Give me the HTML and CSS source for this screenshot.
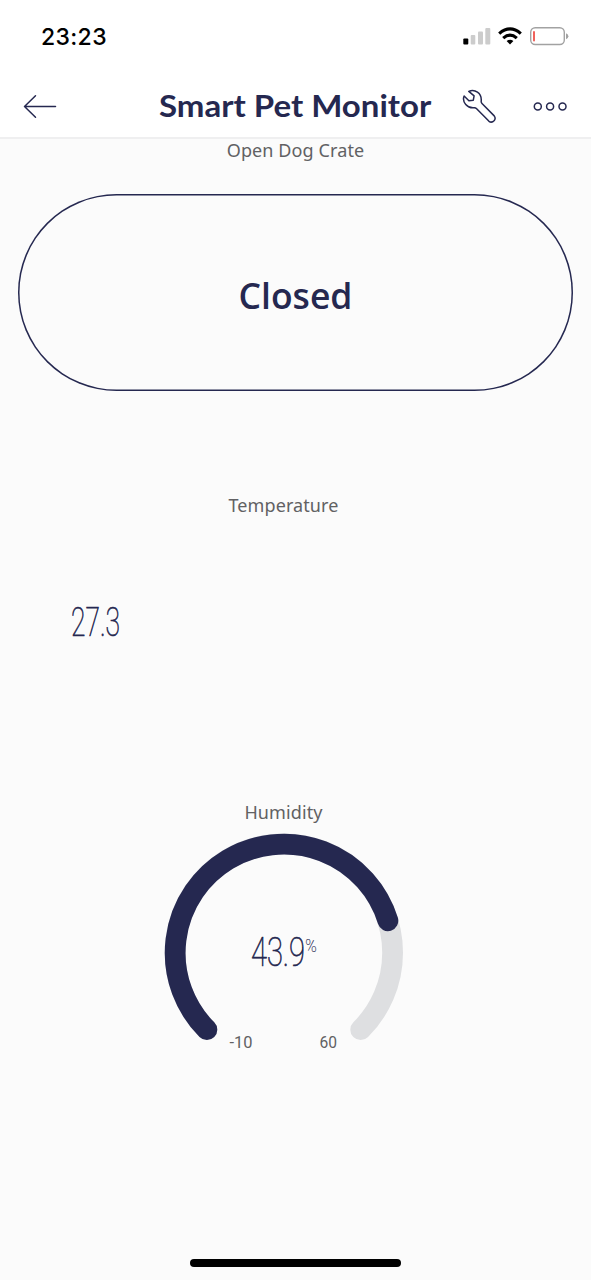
FILE: index.html
```html
<!DOCTYPE html>
<html lang="en">
<head>
<meta charset="utf-8">
<title>Smart Pet Monitor</title>
<link rel="stylesheet" href="styles.css">
</head>
<body>
<div class="screen">
  <div class="status">
    <span class="clock">23:23</span>
    <svg class="status-icons" width="108" height="24" viewBox="462 24 108 24">
      <rect x="463.3" y="38.5" width="5" height="6" rx="1" fill="#000"/>
      <g fill="#ccc"><rect x="470.7" y="35" width="4.6" height="9.5" rx="1"/><rect x="478" y="31.5" width="5" height="13" rx="1"/><rect x="485.3" y="28" width="5" height="16.500" rx="1"/></g>
      <g fill="none" stroke="#000" stroke-width="3.2"><path d="M499.200 33.600Q510 24.300 520.800 33.600"/><path d="M503.200 38.100Q510 32.300 516.800 38.100"/></g>
      <path d="M506.600 41Q510 38.600 513.400 41L510 44.400Z"/>
      <rect x="530.700" y="27.700" width="33.600" height="16.800" rx="4.500" fill="none" stroke="#a2a2a2" stroke-width="1.400"/>
      <rect x="533" y="31" width="2" height="10.500" rx="1" fill="#f0625c"/>
      <path d="M566 33.200Q568.400 34.200 568.400 36.200T566 39.200Z" fill="#a2a2a2"/>
    </svg>
  </div>
  <header class="navbar">
    <svg class="back" width="34" height="26" viewBox="23 93 34 26"><path d="M55.500 106.500H24.500M35.500 95.700L24.500 106.500L35.500 117.300"/></svg>
    <h1 class="title">Smart Pet Monitor</h1>
    <svg class="wrench" width="36" height="36" viewBox="461 88 36 36"><path d="M468.800 91.400C474.500 88.500 482 93 481.200 101Q481 102.500 482 103.500L494.200 115.900Q496 118.200 494.300 120.500Q491.700 123.300 489 121.300L476.400 108.500Q475.500 107.600 474.200 107.700C467.500 108.500 461.700 102 464.100 96L468.900 100.700L473.300 100.200L474.100 95.900Z"/></svg>
    <svg class="more" width="36" height="12" viewBox="532 100 36 12"><circle cx="537.800" cy="106.600" r="3.500"/><circle cx="550.100" cy="106.600" r="3.500"/><circle cx="562.500" cy="106.600" r="3.500"/></svg>
  </header>
  <main class="widgets">
    <section class="crate">
      <h2 class="label label-crate">Open Dog Crate</h2>
      <button class="crate-button"><span class="state">Closed</span></button>
    </section>
    <section class="temperature">
      <h2 class="label label-temperature">Temperature</h2>
      <svg class="reading" width="90" height="56" viewBox="66 594 90 56"><text class="value" x="71" y="636" textLength="49" lengthAdjust="spacingAndGlyphs">27.3</text></svg>
    </section>
    <section class="humidity">
      <h2 class="label label-humidity">Humidity</h2>
      <svg class="gauge" width="240" height="230" viewBox="164 826 240 230">
        <path class="track" d="M206.900 1029.700A108.800 108.800 0 1 1 360.700 1029.700"/>
        <path class="progress" d="M206.900 1029.700A108.800 108.800 0 1 1 387.900 920.700"/>
        <text class="value" x="251" y="965.500" textLength="54" lengthAdjust="spacingAndGlyphs">43.9</text>
        <text class="unit" x="305.300" y="951.500" textLength="11.500" lengthAdjust="spacingAndGlyphs">%</text>
        <text class="limit" x="229.500" y="1047.500" textLength="23" lengthAdjust="spacingAndGlyphs">-10</text>
        <text class="limit" x="319.500" y="1047.500" textLength="17.500" lengthAdjust="spacingAndGlyphs">60</text>
      </svg>
    </section>
  </main>
  <div class="home"></div>
</div>
</body>
</html>
```
FILE: styles.css
```css
* { box-sizing: border-box; }
body { margin: 0; }
.screen {
  width: 591px;
  height: 1280px;
  display: flex;
  flex-direction: column;
  background: #fbfbfb;
  color: #252850;
  font-family: "Noto Sans", sans-serif;
}
.status {
  height: 74px;
  padding: 24px 21px 0 41px;
  display: flex;
  justify-content: space-between;
  background: #fff;
}
.clock {
  font: 500 23px/26px Inter, sans-serif;
  color: #000;
  letter-spacing: .35px;
}
.navbar {
  height: 65px;
  padding: 0 23px;
  display: flex;
  align-items: center;
  background: #fff;
  border-bottom: 2px solid #efeff0;
}
.navbar svg {
  flex: none;
  fill: none;
  stroke: #252850;
  stroke-width: 1.5;
  stroke-linecap: round;
  stroke-linejoin: round;
}
.title {
  width: 274px;
  margin: 0 0 2px 102px;
  font: 700 30px/40px Lato, sans-serif;
  white-space: nowrap;
  transform: scaleX(1.1);
  transform-origin: left center;
}
.wrench { margin-left: 28px; }
.more { margin-left: 35px; }
.widgets { flex: 1; }
.label {
  margin: 0;
  font-size: 18px;
  line-height: 24px;
  font-weight: 400;
  color: #616163;
  text-align: center;
  letter-spacing: .1px;
}
.label-crate { line-height: 22px; }
.crate { height: 354px; }
.crate-button {
  display: flex;
  align-items: center;
  justify-content: center;
  width: 555px;
  height: 197px;
  margin: 33px 18px 0;
  padding: 5px 0 0;
  border: 0;
  box-shadow: inset 0 0 0 1.5px #252850;
  border-radius: 99px;
  background: transparent;
  color: #252850;
}
.state { font: 600 35.5px/48px "Open Sans", sans-serif; }
.temperature { width: 567px; height: 307px; }
.reading { display: block; margin: 77px 0 0 66px; }
.value { font: 100 40px Roboto, sans-serif; fill: #252850; stroke: #252850; stroke-width: .7; }
.humidity { width: 567px; }
.gauge { display: block; margin: 2px auto 0; }
.track, .progress { fill: none; stroke-width: 20.8; stroke-linecap: round; }
.track { stroke: #dedfe1; }
.progress { stroke: #252850; }
.unit { font: 100 19px Roboto, sans-serif; fill: #252850; stroke: #252850; stroke-width: .2; }
.limit { font: 400 16px Roboto, sans-serif; fill: #616163; }
.home {
  width: 211px;
  height: 8px;
  margin: 0 auto 13px;
  border-radius: 4px;
  background: #000;
}
```
